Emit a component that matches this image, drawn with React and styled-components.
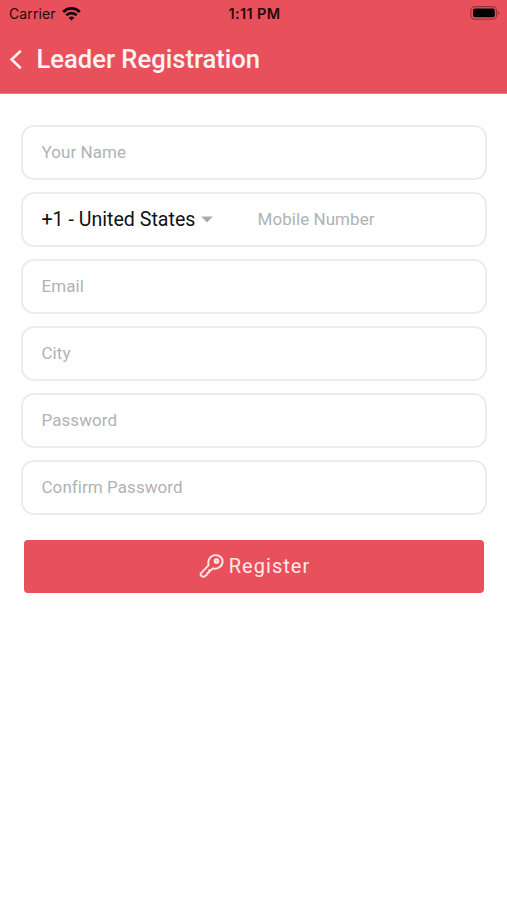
import React from "react";
import styled, { createGlobalStyle } from "styled-components";

const GlobalStyle = createGlobalStyle`
  *, *::before, *::after { box-sizing: border-box; }
  html, body { margin: 0; padding: 0; background: #fff; }
  body { font-family: Roboto, "Liberation Sans", sans-serif; }
`;

const Screen = styled.div`
  width: 100%;
  min-height: 900px;
  background: #fff;
`;

const Header = styled.header`
  height: 94px;
  background: #e8515c;
  border-bottom: 1px solid #ee7b83;
`;

const StatusBar = styled.div`
  display: grid;
  grid-template-columns: 1fr auto 1fr;
  align-items: center;
  height: 27px;
  padding: 0 7px 0 9px;
  font-family: Inter, "Liberation Sans", sans-serif;
  font-size: 14px;
  line-height: 27px;
  color: #25090b;
`;

const Carrier = styled.div`
  display: flex;
  align-items: center;
  gap: 6px;
  letter-spacing: 0.12px;
`;

const Clock = styled.div`
  font-size: 14.5px;
  font-weight: 600;
  letter-spacing: 0.4px;
`;

const BatterySlot = styled.div`
  display: flex;
  justify-content: flex-end;
  padding-bottom: 1px;
`;

const TitleBar = styled.div`
  display: flex;
  align-items: center;
  gap: 12.5px;
  height: 65px;
  padding-left: 9px;
`;

const BackButton = styled.button`
  display: flex;
  padding: 0;
  border: 0;
  background: none;
`;

const Title = styled.h1`
  margin: 0 0 1px;
  font-size: 25.6px;
  line-height: 30px;
  font-weight: 500;
  color: #fff4f4;
`;

const Form = styled.form`
  display: flex;
  flex-direction: column;
  gap: 12px;
  padding: 31px 20px 0 21px;
`;

const Field = styled.div`
  display: flex;
  align-items: center;
  height: 55px;
  padding: 0 18.5px;
  border: 2px solid #ebecec;
  border-radius: 13px;
  background: #fff;
`;

const Input = styled.input`
  flex: 1;
  min-width: 0;
  height: 30px;
  margin-bottom: 1px;
  padding: 0;
  border: 0;
  outline: 0;
  background: none;
  font: 400 17px/30px Roboto, sans-serif;
  letter-spacing: 0.06px;
  color: #111;

  &::placeholder {
    color: #b0b2b3;
    opacity: 1;
  }
`;

const CountryPicker = styled.button`
  display: flex;
  align-items: center;
  gap: 6px;
  width: 216px;
  padding: 0;
  border: 0;
  background: none;
  font: 400 19.6px/30px Roboto, sans-serif;
  color: #111;
  white-space: nowrap;
`;

const RegisterButton = styled.button`
  display: flex;
  align-items: center;
  justify-content: center;
  gap: 5px;
  height: 53px;
  margin: 13px 3px 0 3px;
  padding: 0 0 2px 1px;
  border: 0;
  border-radius: 4px;
  background: #e8515c;
  color: #ffe9e8;
  font: 400 20px/30px Roboto, sans-serif;
  letter-spacing: 1.05px;
`;

const WifiIcon = () => (
  <svg width="19" height="14" viewBox="0 0 19 14" fill="none" stroke="#12070a" strokeWidth="2.7">
    <path d="M1.2 5C6 .2 13 .2 17.8 5" />
    <path d="M4.3 8.3C7.3 5.4 11.7 5.4 14.7 8.3" />
    <path d="M6.6 10.7Q9.5 8.2 12.4 10.7L9.5 13.6Z" fill="#12070a" stroke="none" />
  </svg>
);

const BatteryIcon = () => (
  <svg width="31" height="14" viewBox="0 0 31 14">
    <rect x="1.8" y=".6" width="25.8" height="12.6" rx="4" fill="none" stroke="#963039" strokeWidth="1.1" />
    <rect x="4" y="2.6" width="21.8" height="8.7" rx="2" fill="#000" />
    <path d="M29 4.9Q31.2 6.9 29 8.9Z" fill="#963039" />
  </svg>
);

const BackIcon = () => (
  <svg width="15" height="20" viewBox="0 0 15 20" fill="none" stroke="#fff4f4" strokeWidth="2.6">
    <path d="M11.8 .8L2.6 9.5L11.8 18.2" />
  </svg>
);

const CaretIcon = () => (
  <svg width="12" height="7" viewBox="0 0 12 7">
    <path d="M.2.4H11.8L6 6.6Z" fill="#a9aaab" />
  </svg>
);

const KeyIcon = () => (
  <svg width="25" height="25" viewBox="0 0 25 25" fill="none" stroke="#ffe9e8" strokeWidth="1.9" strokeLinejoin="round" strokeLinecap="round">
    <path d="M9.6 12.1C8.3 7 11.5 2.2 16.4 2.1C20.8 2 23.8 4.9 23.6 8.9C23.4 13.4 18.6 16.6 13.7 15.4L12 17.3H10.2V19.3L8.5 19.9L8.1 21.6L5.5 23.5C3.8 24.5 .9 22.7 1.7 20.6Z" />
    <circle cx="17.5" cy="8" r="1.9" fill="#f5a9aa" />
  </svg>
);

export default function App() {
  return (
    <Screen>
      <GlobalStyle />
      <Header>
        <StatusBar>
          <Carrier>Carrier <WifiIcon /></Carrier>
          <Clock>1:11 PM</Clock>
          <BatterySlot><BatteryIcon /></BatterySlot>
        </StatusBar>
        <TitleBar>
          <BackButton aria-label="Back"><BackIcon /></BackButton>
          <Title>Leader Registration</Title>
        </TitleBar>
      </Header>
      <Form>
        <Field><Input placeholder="Your Name" /></Field>
        <Field>
          <CountryPicker type="button">+1 - United States <CaretIcon /></CountryPicker>
          <Input type="tel" placeholder="Mobile Number" />
        </Field>
        <Field><Input type="email" placeholder="Email" /></Field>
        <Field><Input placeholder="City" /></Field>
        <Field><Input type="password" placeholder="Password" /></Field>
        <Field><Input type="password" placeholder="Confirm Password" /></Field>
        <RegisterButton type="button"><KeyIcon />Register</RegisterButton>
      </Form>
    </Screen>
  );
}
